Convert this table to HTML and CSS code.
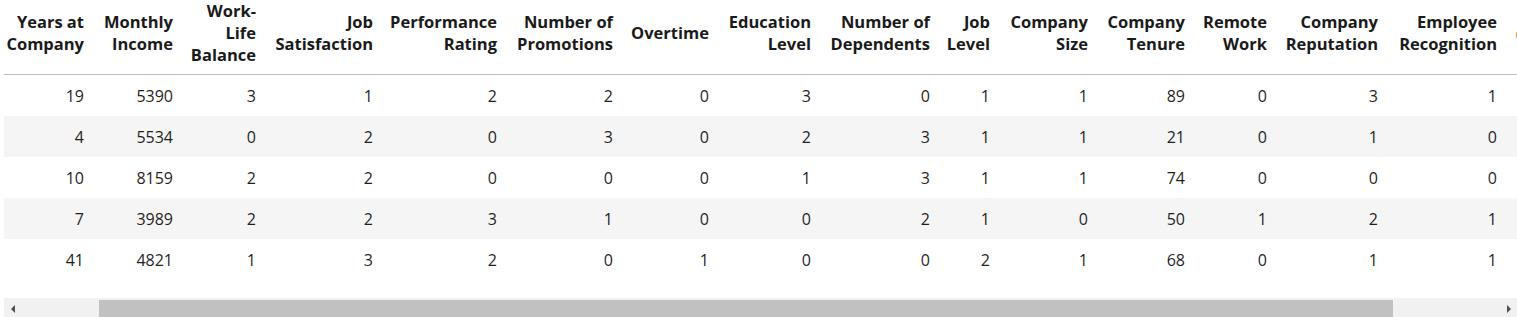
FILE: index.html
```html
<!DOCTYPE html>
<html>
<head>
<meta charset="utf-8">
<link rel="stylesheet" href="styles.css">
</head>
<body>
<div class="output">
  <div class="viewport">
    <table class="dataframe">
      <colgroup>
        <col class="c1"><col class="c2"><col class="c3"><col class="c4"><col class="c5">
        <col class="c6"><col class="c7"><col class="c8"><col class="c9"><col class="c10">
        <col class="c11"><col class="c12"><col class="c13"><col class="c14"><col class="c15"><col class="c16">
      </colgroup>
      <thead>
        <tr>
          <th class="first">Years at<br>Company</th>
          <th>Monthly<br>Income</th>
          <th>Work-<br>Life<br>Balance</th>
          <th>Job<br>Satisfaction</th>
          <th>Performance<br>Rating</th>
          <th>Number of<br>Promotions</th>
          <th>Overtime</th>
          <th>Education<br>Level</th>
          <th>Number of<br>Dependents</th>
          <th>Job<br>Level</th>
          <th>Company<br>Size</th>
          <th>Company<br>Tenure</th>
          <th>Remote<br>Work</th>
          <th>Company<br>Reputation</th>
          <th>Employee<br>Recognition</th>
          <th class="edge"><span class="mark"></span></th>
        </tr>
      </thead>
      <tbody>
        <tr><td class="first">19</td><td>5390</td><td>3</td><td>1</td><td>2</td><td>2</td><td>0</td><td>3</td><td>0</td><td>1</td><td>1</td><td>89</td><td>0</td><td>3</td><td>1</td><td></td></tr>
        <tr><td class="first">4</td><td>5534</td><td>0</td><td>2</td><td>0</td><td>3</td><td>0</td><td>2</td><td>3</td><td>1</td><td>1</td><td>21</td><td>0</td><td>1</td><td>0</td><td></td></tr>
        <tr><td class="first">10</td><td>8159</td><td>2</td><td>2</td><td>0</td><td>0</td><td>0</td><td>1</td><td>3</td><td>1</td><td>1</td><td>74</td><td>0</td><td>0</td><td>0</td><td></td></tr>
        <tr><td class="first">7</td><td>3989</td><td>2</td><td>2</td><td>3</td><td>1</td><td>0</td><td>0</td><td>2</td><td>1</td><td>0</td><td>50</td><td>1</td><td>2</td><td>1</td><td></td></tr>
        <tr><td class="first">41</td><td>4821</td><td>1</td><td>3</td><td>2</td><td>0</td><td>1</td><td>0</td><td>0</td><td>2</td><td>1</td><td>68</td><td>0</td><td>1</td><td>1</td><td></td></tr>
      </tbody>
    </table>
  </div>
  <div class="scrollbar">
    <div class="sb-btn"><span class="arrow-left"></span></div>
    <div class="sb-track">
      <div class="sb-thumb"></div>
    </div>
    <div class="sb-btn"><span class="arrow-right"></span></div>
  </div>
</div>
</body>
</html>
```
FILE: styles.css
```css
html, body {
  margin: 0;
  padding: 0;
  background: #ffffff;
}

body {
  font-family: "Open Sans", "Noto Sans", "Liberation Sans", sans-serif;
  color: #1f1f1f;
}

.output {
  margin-left: 4px;
  width: 1513px;
}

.viewport {
  width: 1513px;
  overflow: hidden;
  height: 298px;
}

.dataframe {
  border-collapse: collapse;
  border-spacing: 0;
  table-layout: fixed;
  width: 1600px;
  font-size: 16px;
}

.c1 { width: 88px; }
.c2 { width: 89px; }
.c3 { width: 83px; }
.c4 { width: 117px; }
.c5 { width: 124px; }
.c6 { width: 116px; }
.c7 { width: 96px; }
.c8 { width: 102px; }
.c9 { width: 119px; }
.c10 { width: 60px; }
.c11 { width: 98px; }
.c12 { width: 97px; }
.c13 { width: 82px; }
.c14 { width: 111px; }
.c15 { width: 119px; }
.c16 { width: 99px; }

.dataframe th {
  font-weight: 700;
  font-size: 16.5px;
  text-align: right;
  vertical-align: middle;
  line-height: 22px;
  padding: 0 8px 8px 0;
  border-bottom: 1px solid #bdbdbd;
  color: #1a1a1a;
  white-space: nowrap;
}

.dataframe th.edge {
  text-align: left;
  padding-left: 11px;
}

.mark {
  display: inline-block;
  width: 3px;
  height: 6px;
  background: #e8a040;
  border-radius: 1px;
  vertical-align: middle;
}

.dataframe td {
  text-align: right;
  line-height: 22px;
  padding: 10px 8px 9px 0;
  white-space: nowrap;
}

.dataframe tbody tr:nth-child(even) {
  background: #f5f5f5;
}

.scrollbar {
  display: flex;
  height: 19px;
  background: #f1f1f1;
}

.sb-btn {
  width: 17px;
  display: flex;
  align-items: center;
  justify-content: center;
}

.sb-track {
  flex: 1;
  display: flex;
  align-items: flex-end;
  padding-left: 78px;
  padding-right: 107px;
}

.sb-thumb {
  flex: 1;
  height: 17px;
  background: #c1c1c1;
}

.arrow-left {
  width: 0;
  height: 0;
  border-top: 4px solid transparent;
  border-bottom: 4px solid transparent;
  border-right: 4px solid #505050;
  margin-top: 2px;
}

.arrow-right {
  width: 0;
  height: 0;
  border-top: 4px solid transparent;
  border-bottom: 4px solid transparent;
  border-left: 4px solid #505050;
  margin-top: 2px;
}
```
